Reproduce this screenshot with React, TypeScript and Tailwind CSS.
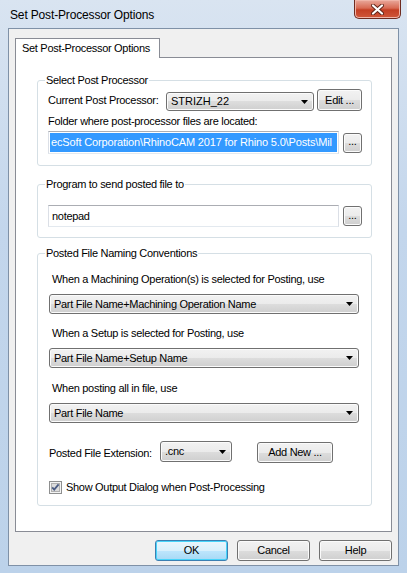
import type { ReactNode } from 'react';

const btn =
  'flex items-center justify-center rounded-[3px] border border-[#707070] bg-[linear-gradient(#f2f2f2,#ebebeb_50%,#dddddd_50%,#cfcfcf)] shadow-[inset_0_0_0_1px_#fbfbfb]';

const input = 'border border-[#abadb3] border-x-[#dbdfe6] border-b-[#e3e9ef] bg-white';

function Arrow() {
  return (
    <svg width="7" height="4" viewBox="0 0 7 4" className="shrink-0">
      <path d="M0 0h7L3.5 4z" fill="#000" />
    </svg>
  );
}

function Combo({ value, className }: { value: string; className: string }) {
  return (
    <div className={`${btn} !justify-between pl-[4px] pr-[5px] ${className}`}>
      <span className="whitespace-nowrap">{value}</span>
      <Arrow />
    </div>
  );
}

function Group({ label, className, children }: { label: string; className: string; children: ReactNode }) {
  return (
    <div className={`relative rounded-[3px] border border-[#d5dfe5] ${className}`}>
      <span className="absolute -top-[7px] left-[7px] bg-white px-[1px] leading-[13px]">{label}</span>
      {children}
    </div>
  );
}

function CheckBox() {
  return (
    <svg width="13" height="13" viewBox="0 0 13 13" className="shrink-0">
      <rect x="0.5" y="0.5" width="12" height="12" fill="#f4f4f4" stroke="#8e8f8f" />
      <rect x="2.5" y="2.5" width="8" height="8" fill="#dcdcdc" stroke="#b0b0b0" />
      <path d="M3.2 6.4l2 2.2 4.4-5.2" fill="none" stroke="#4b5c84" strokeWidth="1.8" />
    </svg>
  );
}

export default function App() {
  return (
    <div className="flex h-[573px] w-[407px] flex-col bg-[linear-gradient(#d9e4f1,#c3d6ec_40%,#bcd2ea)] font-['Liberation_Sans',Arial,sans-serif] text-[11px] tracking-[-0.3px] text-black">
      {/* title bar */}
      <div className="flex h-[28px] shrink-0 items-start">
        <span className="mt-[8px] pl-[10px] text-[12px] leading-[15px] tracking-[-0.15px] text-black">
          Set Post-Processor Options
        </span>
        <div className="ml-auto mr-[6px] flex h-[19px] w-[47px] items-center justify-center rounded-b-[5px] border border-t-0 border-[#6e2b20] bg-[linear-gradient(#e9a99c,#d86a53_45%,#c43f24_55%,#d0573a)] shadow-[inset_0_0_0_1px_#f0b5a8]">
          <svg width="13" height="11" viewBox="0 0 13 11">
            <path d="M2 1.5l9 8M11 1.5l-9 8" stroke="#5e2418" strokeWidth="4" strokeLinecap="round" />
            <path d="M2 1.5l9 8M11 1.5l-9 8" stroke="#fff" strokeWidth="2.2" strokeLinecap="round" />
          </svg>
        </div>
      </div>

      {/* client area */}
      <div className="mx-[8px] flex h-[538px] flex-col border border-[#7f91a7] bg-[#f0f0f0] px-[6px] pt-[9px]">
        <div className="relative z-10 -mb-px flex h-[20px] w-[145px] items-center border border-b-0 border-[#898c95] bg-white pl-[6px]">
          Set Post-Processor Options
        </div>
        <div className="flex h-[475px] flex-col border border-[#898c95] bg-white pl-[21px] pr-[19px]">
          <Group label="Select Post Processor" className="mt-[22px] pb-[11px] pl-[10px] pt-[8px]">
            <div className="flex h-[22px] items-end">
              <span className="w-[118px] self-center pt-[1px]">Current Post Processor:</span>
              <Combo value="STRIZH_22" className="h-[19px] w-[148px] tracking-normal" />
              <div className={`${btn} ml-[3px] h-[22px] w-[45px]`}>Edit ...</div>
            </div>
            <div className="mt-[4px] h-[13px] leading-[13px]">Folder where post-processor files are located:</div>
            <div className="mt-[3px] flex items-center">
              <div className={`${input} flex h-[23px] w-[291px] p-[1px]`}>
                <div className="flex flex-1 items-center whitespace-nowrap bg-[#3399ff] pl-[1px] tracking-[-0.15px] text-white">
                  ecSoft Corporation\RhinoCAM 2017 for Rhino 5.0\Posts\Mil
                </div>
              </div>
              <div className={`${btn} ml-[4px] h-[20px] w-[19px] pb-[2px]`}>...</div>
            </div>
          </Group>

          <Group label="Program to send posted file to" className="mt-[18px] pb-[10px] pl-[10px] pt-[20px]">
            <div className="flex items-center">
              <div className={`${input} flex h-[22px] w-[291px] items-center pl-[3px]`}>notepad</div>
              <div className={`${btn} ml-[4px] h-[20px] w-[19px] pb-[2px]`}>...</div>
            </div>
          </Group>

          <Group label="Posted File Naming Conventions" className="mt-[15px] pb-[11px] pl-[11px] pt-[19px]">
            <div className="h-[13px] pl-[3px] leading-[13px]">When a Machining Operation(s) is selected for Posting, use</div>
            <Combo value="Part File Name+Machining Operation Name" className="mt-[8px] h-[20px] w-[310px]" />
            <div className="mt-[13px] h-[13px] pl-[3px] leading-[13px]">When a Setup is selected for Posting, use</div>
            <Combo value="Part File Name+Setup Name" className="mt-[8px] h-[20px] w-[310px]" />
            <div className="mt-[14px] h-[13px] pl-[3px] leading-[13px]">When posting all in file, use</div>
            <Combo value="Part File Name" className="mt-[8px] h-[20px] w-[310px]" />
            <div className="mt-[18px] flex h-[22px] items-center">
              <span className="w-[111px] pt-[3px]">Posted File Extension:</span>
              <Combo value=".cnc" className="h-[21px] w-[72px] self-start" />
              <div className={`${btn} ml-[25px] h-[21px] w-[76px] self-end`}>Add New ...</div>
            </div>
            <div className="mt-[18px] flex h-[13px] items-center gap-[4px]">
              <CheckBox />
              <span className="leading-[13px]">Show Output Dialog when Post-Processing</span>
            </div>
          </Group>
        </div>

        <div className="mt-[8px] flex justify-end gap-[9px]">
          <div className="flex h-[21px] w-[73px] items-center justify-center rounded-[3px] border border-[#3c7fb1] bg-[linear-gradient(#eaf6fd,#d9f0fc_50%,#bee6fd_50%,#a7d9f5)] shadow-[inset_0_0_0_1px_#48d4fa]">
            OK
          </div>
          <div className={`${btn} h-[21px] w-[73px]`}>Cancel</div>
          <div className={`${btn} h-[21px] w-[73px]`}>Help</div>
        </div>
      </div>
    </div>
  );
}
